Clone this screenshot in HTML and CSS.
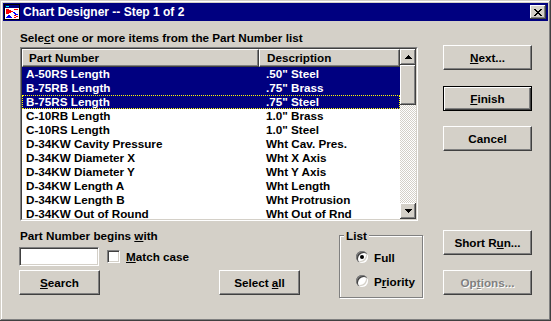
FILE: index.html
```html
<!DOCTYPE html>
<html lang="en">
<head>
    <meta charset="UTF-8">
    <title>Chart Designer -- Step 1 of 2</title>
    <link rel="stylesheet" href="styles.css">
</head>
<body>
<div class="window">
    <!-- Title bar -->
    <div class="titlebar">
        <svg class="app-icon" viewBox="0 0 16 16" width="16" height="16" shape-rendering="crispEdges">
            <rect width="16" height="16" fill="#000"/>
            <rect x="1" y="1" width="14" height="14" fill="#fff"/>
            <rect x="1" y="1" width="14" height="3" fill="#000080"/>
            <rect x="2" y="2" width="3" height="1" fill="#00ffff"/>
            <path d="M2 5h3v1h2v1h2v1h-2v1h-2v1h-3z" fill="#ff0000"/>
            <path d="M2 14l3-4 3 4z" fill="#0000ff"/>
            <path d="M10 5h4v1h-4zM10 11h2v1h-2zM12 12h2v1h-2zM10 13h2v1h-2z" fill="#ff0000"/>
            <path d="M9 8h2v1h1v1h2v1h-3v-1h-1v-1h-1z" fill="#0000ff"/>
        </svg>
        <span class="title">Chart Designer -- Step 1 of 2</span>
        <div class="close-btn">
            <svg width="8" height="7" viewBox="0 0 8 7" shape-rendering="crispEdges">
                <path d="M0 0h2v1h-2zM6 0h2v1h-2zM1 1h2v1h-2zM5 1h2v1h-2zM2 2h4v1h-4zM3 3h2v1h-2zM2 4h4v1h-4zM1 5h2v1h-2zM5 5h2v1h-2zM0 6h2v1h-2zM6 6h2v1h-2z" fill="#000"/>
            </svg>
        </div>
    </div>

    <div class="content">
        <div class="main">
            <div class="prompt">Sele<u>c</u>t one or more items from the Part Number list</div>

            <!-- Part number list -->
            <div class="listbox">
                <div class="listbox-inner">
                    <div class="list">
                        <div class="list-header">
                            <div class="col-head part">Part Number</div>
                            <div class="col-head desc">Description</div>
                        </div>
                        <div class="row selected"><span>A-50RS Length</span><span>.50" Steel</span></div>
                        <div class="row selected"><span>B-75RB Length</span><span>.75" Brass</span></div>
                        <div class="row selected focus"><span>B-75RS Length</span><span>.75" Steel</span></div>
                        <div class="row"><span>C-10RB Length</span><span>1.0" Brass</span></div>
                        <div class="row"><span>C-10RS Length</span><span>1.0" Steel</span></div>
                        <div class="row"><span>D-34KW Cavity Pressure</span><span>Wht Cav. Pres.</span></div>
                        <div class="row"><span>D-34KW Diameter X</span><span>Wht X Axis</span></div>
                        <div class="row"><span>D-34KW Diameter Y</span><span>Wht Y Axis</span></div>
                        <div class="row"><span>D-34KW Length A</span><span>Wht Length</span></div>
                        <div class="row"><span>D-34KW Length B</span><span>Wht Protrusion</span></div>
                        <div class="row"><span>D-34KW Out of Round</span><span>Wht Out of Rnd</span></div>
                    </div>
                    <div class="scrollbar">
                        <div class="sb-btn raised">
                            <svg width="7" height="4" viewBox="0 0 7 4" shape-rendering="crispEdges"><path d="M3 0h1v1h-1zM2 1h3v1h-3zM1 2h5v1h-5zM0 3h7v1h-7z" fill="#000"/></svg>
                        </div>
                        <div class="sb-thumb raised"></div>
                        <div class="sb-track"></div>
                        <div class="sb-btn raised">
                            <svg width="7" height="4" viewBox="0 0 7 4" shape-rendering="crispEdges"><path d="M0 0h7v1h-7zM1 1h5v1h-5zM2 2h3v1h-3zM3 3h1v1h-1z" fill="#000"/></svg>
                        </div>
                    </div>
                </div>
            </div>

            <div class="lower">
                <div class="search-group">
                    <div class="field-label">Part Number begins <u>w</u>ith</div>
                    <div class="field-row">
                        <div class="textbox"></div>
                        <div class="checkbox"></div>
                        <span class="check-label"><u>M</u>atch case</span>
                    </div>
                    <div class="btn search-btn"><span><u>S</u>earch</span></div>
                </div>
                <div class="btn select-all"><span>Select <u>a</u>ll</span></div>
                <fieldset class="list-group">
                    <legend>List</legend>
                    <div class="radios">
                        <div class="radio-row"><span class="radio checked"></span><span>Full</span></div>
                        <div class="radio-row"><span class="radio"></span><span>P<u>r</u>iority</span></div>
                    </div>
                </fieldset>
            </div>
        </div>

        <!-- Command buttons -->
        <div class="side">
            <div class="btn next-btn"><span><u>N</u>ext...</span></div>
            <div class="btn default finish-btn"><span><u>F</u>inish</span></div>
            <div class="btn cancel-btn"><span>Cancel</span></div>
            <div class="btn short-btn"><span>Short R<u>u</u>n...</span></div>
            <div class="btn disabled options-btn"><span>Op<u>t</u>ions...</span></div>
        </div>
    </div>
</div>
</body>
</html>
```
FILE: styles.css
```css
/* General */
body {
    margin: 0;
    background: #d4d0c8;
    font-family: "Liberation Sans", Arial, sans-serif;
    font-size: 11.7px;
    font-weight: bold;
    color: #000;
}

.window {
    width: 551px;
    height: 321px;
    box-sizing: border-box;
    padding: 3px;
    display: flex;
    flex-direction: column;
    background: #d4d0c8;
    box-shadow: inset -1px -1px #404040, inset 1px 1px #d4d0c8, inset -2px -2px #808080, inset 2px 2px #fff;
}

/* Title bar */
.titlebar {
    height: 18px;
    display: flex;
    align-items: center;
    padding: 0 2px 0 1px;
    background: #000080;
    color: #fff;
}

.app-icon {
    flex: none;
    margin-right: 3px;
}

.title {
    flex: 1;
    font-size: 12px;
}

.close-btn {
    width: 16px;
    height: 14px;
    box-sizing: border-box;
    display: flex;
    align-items: center;
    justify-content: center;
    background: #d4d0c8;
    box-shadow: inset -1px -1px #404040, inset 1px 1px #fff, inset -2px -2px #808080;
}

/* Layout */
.content {
    flex: 1;
    display: flex;
    padding-left: 16px;
}

.main {
    width: 404px;
}

.prompt {
    margin-top: 10px;
    padding-left: 1px;
    line-height: 13px;
}

/* List view */
.listbox {
    width: 398px;
    height: 174px;
    margin: 3px 0 0 1px;
    box-sizing: border-box;
    border: 1px solid;
    border-color: #808080 #fff #fff #808080;
}

.listbox-inner {
    height: 100%;
    box-sizing: border-box;
    display: flex;
    border: 1px solid;
    border-color: #404040 #d4d0c8 #d4d0c8 #404040;
    background: #fff;
}

.list {
    flex: 1;
    overflow: hidden;
}

.list-header {
    display: flex;
    height: 18px;
}

.col-head {
    height: 18px;
    box-sizing: border-box;
    line-height: 16px;
    padding-left: 6px;
    background: #d4d0c8;
    border: 1px solid;
    border-color: #fff #404040 #404040 #fff;
    box-shadow: inset -1px -1px #808080;
}

.col-head.part {
    width: 237px;
}

.col-head.desc {
    flex: 1;
    padding-left: 7px;
}

.row {
    display: grid;
    grid-template-columns: 240px 1fr;
    height: 14px;
    line-height: 14px;
    padding-left: 4px;
    white-space: nowrap;
}

.row.selected {
    background: #000080;
    color: #fff;
}

.row.focus {
    outline: 1px dotted #ffff00;
    outline-offset: -1px;
}

/* Scrollbar */
.scrollbar {
    width: 16px;
    display: flex;
    flex-direction: column;
}

.raised {
    background: #d4d0c8;
    box-shadow: inset -1px -1px #404040, inset 1px 1px #fff, inset -2px -2px #808080;
}

.sb-btn {
    height: 16px;
    display: flex;
    align-items: center;
    justify-content: center;
}

.sb-thumb {
    height: 40px;
}

.sb-track {
    flex: 1;
    background: repeating-conic-gradient(#d4d0c8 0 25%, #fff 0 50%) 0 0 / 2px 2px;
}

/* Buttons */
.btn {
    height: 25px;
    box-sizing: border-box;
    display: flex;
    align-items: center;
    justify-content: center;
    background: #d4d0c8;
    border: 1px solid;
    border-color: #fff #404040 #404040 #fff;
    box-shadow: inset -1px -1px #808080;
}

.btn.default {
    border-color: #000;
    box-shadow: inset 1px 1px #fff, inset -1px -1px #404040, inset -2px -2px #808080;
}

.btn.disabled {
    color: #808080;
    text-shadow: 1px 1px #fff;
}

.side {
    width: 89px;
    margin-left: 20px;
    padding-top: 24px;
}

.finish-btn { margin-top: 16px; }
.cancel-btn { margin-top: 15px; }
.short-btn { margin-top: 79px; }
.options-btn { margin-top: 15px; }

/* Lower controls */
.lower {
    display: flex;
    margin-top: 8px;
}

.search-group {
    width: 200px;
}

.field-label {
    line-height: 13px;
    padding-left: 1px;
}

.field-row {
    display: flex;
    align-items: center;
    margin-top: 5px;
}

.textbox,
.checkbox {
    box-sizing: border-box;
    background: #fff;
    border: 1px solid;
    border-color: #808080 #fff #fff #808080;
    box-shadow: inset 1px 1px #404040, inset -1px -1px #d4d0c8;
}

.textbox {
    width: 80px;
    height: 19px;
}

.checkbox {
    width: 13px;
    height: 13px;
    margin: 0 6px 1px 8px;
}

.search-btn {
    width: 81px;
    margin-top: 4px;
}

.select-all {
    width: 81px;
    margin-top: 41px;
}

/* Group box */
.list-group {
    width: 84px;
    height: 69px;
    box-sizing: border-box;
    margin: 0 0 0 39px;
    padding: 0;
    border: 1px solid #808080;
    box-shadow: inset 1px 1px #fff, 1px 1px #fff;
}

.list-group legend {
    margin-left: 4px;
    padding: 0 2px;
    line-height: 13px;
    background: #d4d0c8;
}

.radios {
    padding: 8px 0 0 16px;
}

.radio-row {
    display: flex;
    align-items: center;
    height: 14px;
    margin-bottom: 10px;
}

.radio {
    position: relative;
    width: 12px;
    height: 12px;
    margin-right: 6px;
    border-radius: 50%;
    background: #fff;
    box-shadow: inset 1px 1px #808080, inset 2px 2px #404040, inset -1px -1px #fff, inset -2px -2px #d4d0c8;
}

.radio.checked::after {
    content: "";
    position: absolute;
    left: 4px;
    top: 4px;
    width: 4px;
    height: 4px;
    border-radius: 50%;
    background: #000;
}
```
